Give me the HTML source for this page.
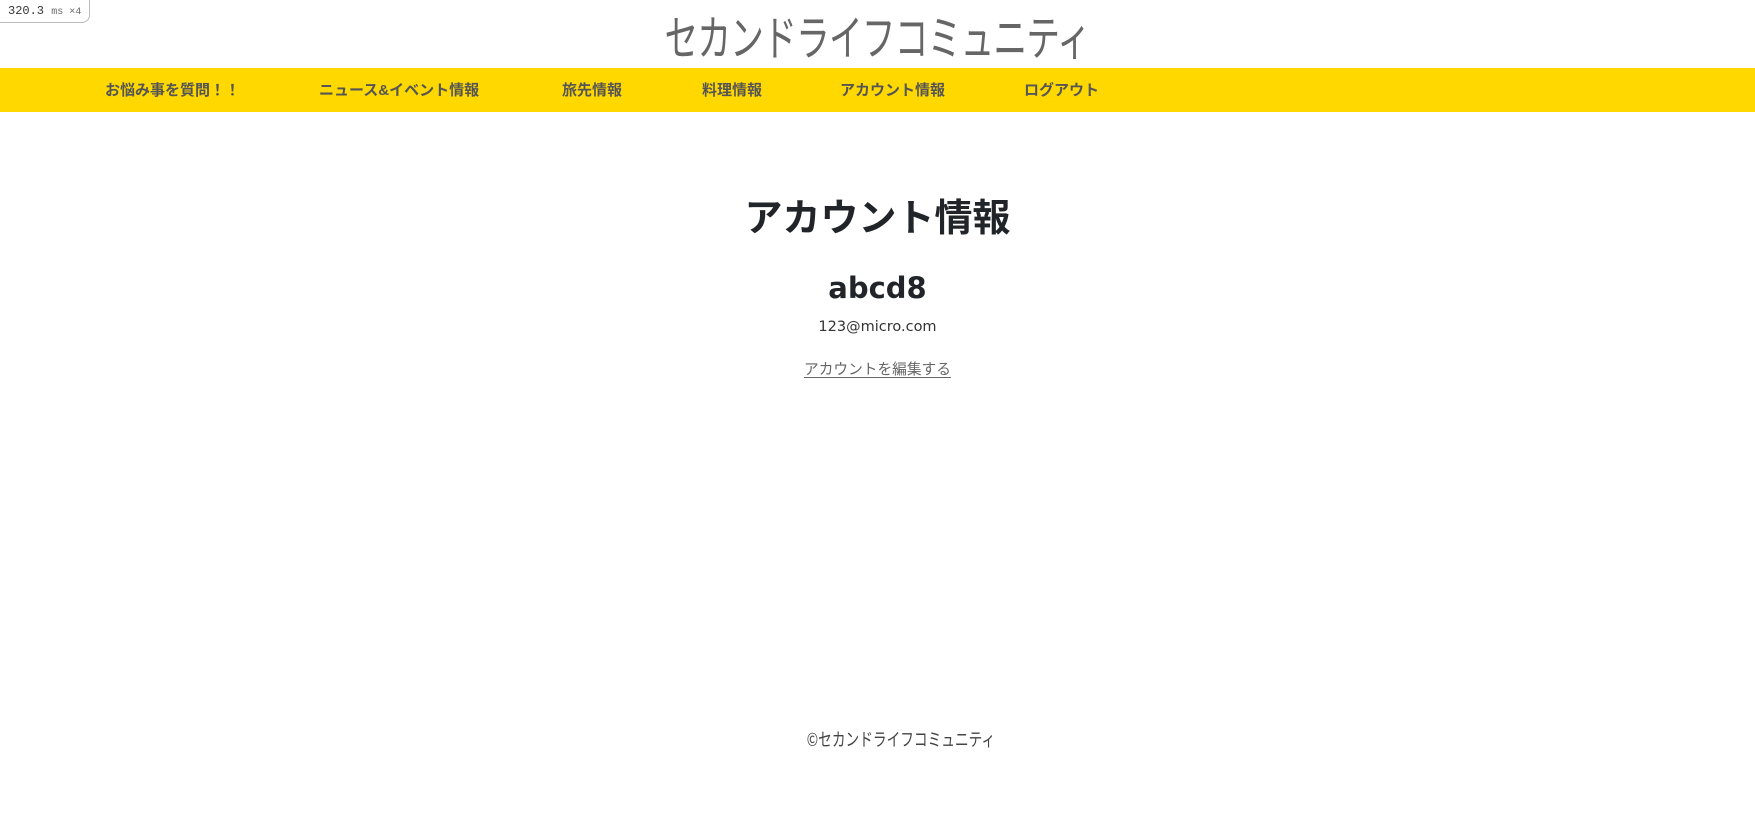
<!DOCTYPE html>
<html><head><meta charset="utf-8">
<style>
html,body{margin:0;padding:0;width:1755px;height:815px;background:#fff;overflow:hidden;font-family:"Liberation Sans","Noto Sans CJK JP",sans-serif;position:relative}
.badge{position:absolute;left:0;top:0;height:22px;padding:0 8px;border:1px solid #bbb;border-top:none;border-left:none;border-radius:0 0 8px 0;font:12px "Liberation Mono",monospace;line-height:22px;color:#333;background:#fff}
.badge small{font-size:10px;color:#666}
.title{position:absolute;left:0;width:1755px;top:6px;text-align:center;font-size:48px;font-weight:400;color:#666;line-height:56px;letter-spacing:-1px;font-family:"Noto Sans CJK JP",sans-serif;transform:scaleX(0.70);transform-origin:877px 0}
.nav{position:absolute;left:0;top:68px;width:1755px;height:44px;background:#ffd800}
.nav span{position:absolute;top:1px;line-height:44px;font-size:15px;font-weight:bold;color:#555;white-space:nowrap}
.c{position:absolute;left:0;width:1755px;text-align:center;white-space:nowrap}
h1{margin:0;font-size:38px;font-weight:bold;color:#212529;top:193px;line-height:52px}
.name{font-size:29px;color:#212529;top:268px;line-height:40px;font-family:"DejaVu Sans",sans-serif;font-weight:600}
.mail{font-size:14.5px;color:#333;top:317px;line-height:20px;font-family:"DejaVu Sans",sans-serif}
.edit{font-size:14.7px;color:#666;top:358px;line-height:24px}
.edit u{text-decoration:underline;text-underline-offset:3px}
.foot{position:absolute;left:901px;top:727px;font-size:18px;color:#444;line-height:24px;white-space:nowrap;transform:translateX(-50%) scaleX(0.76);transform-origin:50% 0;font-family:"Noto Sans CJK JP",sans-serif}
</style></head><body>
<div class="badge">320.3 <small>ms ×4</small></div>
<div class="title">セカンドライフコミュニティ</div>
<div class="nav">
<span style="left:105px">お悩み事を質問！！</span>
<span style="left:319px">ニュース&amp;イベント情報</span>
<span style="left:562px">旅先情報</span>
<span style="left:702px">料理情報</span>
<span style="left:840px">アカウント情報</span>
<span style="left:1024px">ログアウト</span>
</div>
<h1 class="c">アカウント情報</h1>
<div class="c name">abcd8</div>
<div class="c mail">123@micro.com</div>
<div class="c edit"><u>アカウントを編集する</u></div>
<div class="foot">©セカンドライフコミュニティ</div>
</body></html>
